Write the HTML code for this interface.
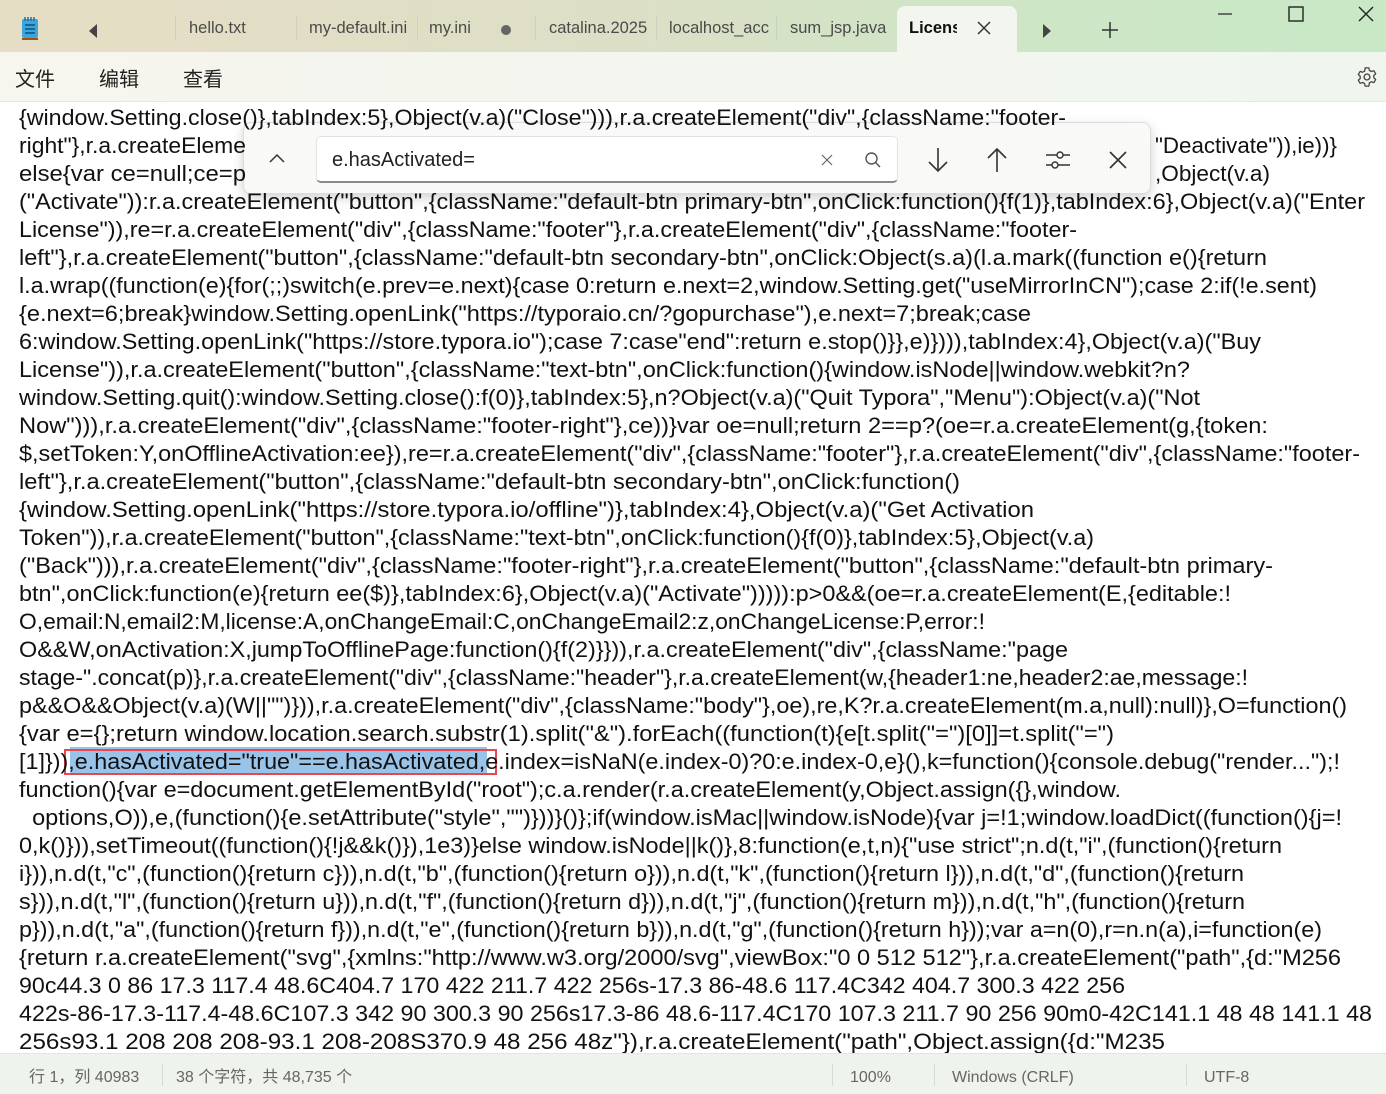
<!DOCTYPE html>
<html><head><meta charset="utf-8">
<style>
*{margin:0;padding:0;box-sizing:border-box}
body{width:1386px;height:1094px;overflow:hidden;position:relative;background:#fff;font-family:"Liberation Sans","Noto Sans CJK SC",sans-serif}
#title{position:absolute;left:0;top:0;width:1386px;height:52px;background:linear-gradient(90deg,#e6dec4 0%,#dcdfc6 45%,#cde6c6 75%,#c8e8c6 100%)}
#menu{position:absolute;left:0;top:52px;width:1386px;height:50px;background:linear-gradient(90deg,#f6f5ee,#f0f6ee);border-bottom:1px solid #e6e8e2}
.tab{position:absolute;top:19px;font-size:16.5px;color:#4a4a4a;white-space:nowrap;overflow:hidden}
.sep{position:absolute;top:16px;width:1px;height:24px;background:#cfcfc0}
#text{position:absolute;left:0;top:103px;width:1386px;height:950px;overflow:hidden}
.l{position:absolute;left:19px;height:28px;line-height:28px;font-size:22px;color:#111;white-space:pre;transform-origin:0 50%}
#status{position:absolute;left:0;top:1053px;width:1386px;height:41px;background:#eef3eb;border-top:1px solid #e2e6df;font-size:16px;color:#666}
#status span{position:absolute;top:15px;line-height:18px;white-space:nowrap}
#status i{position:absolute;top:10px;width:1px;height:22px;background:#d6dad2}
#find{position:absolute;left:243px;top:122px;width:908px;height:72px;background:#f9f9f8;border:1px solid #dcdcdc;border-radius:8px;box-shadow:0 4px 12px rgba(0,0,0,.18)}
#inp{position:absolute;left:72px;top:13px;width:582px;height:47px;background:#fff;border:1px solid #e3e3e3;border-bottom:2px solid #8a8a8a;border-radius:5px;font-size:20px;color:#222;padding:12px 0 0 15px}
</style></head><body>
<div id="title">
  <svg style="position:absolute;left:21px;top:16px" width="18" height="26" viewBox="0 0 18 26"><rect x="1" y="3" width="16" height="19" rx="2" fill="#3aa6dc"/><rect x="1" y="22" width="16" height="2" fill="#a0521e"/><path d="M4 9h10M4 13h10M4 17h10" stroke="#0d4f7a" stroke-width="1.6"/><path d="M4 1v4M7 1v4M10 1v4M13 1v4" stroke="#1b6aa0" stroke-width="1.4"/></svg>
  <svg style="position:absolute;left:88px;top:24px" width="10" height="14"><path d="M9 0L1 7l8 7z" fill="#444"/></svg>
  <div class="sep" style="left:175px"></div>
  <div class="tab" style="left:189px;width:100px">hello.txt</div>
  <div class="sep" style="left:296px"></div>
  <div class="tab" style="left:309px;width:102px">my-default.ini</div>
  <div class="sep" style="left:417px"></div>
  <div class="tab" style="left:429px;width:60px">my.ini</div>
  <div style="position:absolute;left:501px;top:25px;width:10px;height:10px;border-radius:50%;background:#666"></div>
  <div class="sep" style="left:535px"></div>
  <div class="tab" style="left:549px;width:102px">catalina.2025</div>
  <div class="sep" style="left:656px"></div>
  <div class="tab" style="left:669px;width:101px">localhost_acc</div>
  <div class="sep" style="left:776px"></div>
  <div class="tab" style="left:790px;width:104px">sum_jsp.java</div>
  <div style="position:absolute;left:897px;top:6px;width:120px;height:47px;background:#f2f6ee;border-radius:8px 8px 0 0"></div>
  <div class="tab" style="left:909px;width:48px;color:#111;font-weight:bold">License</div>
  <svg style="position:absolute;left:977px;top:21px" width="14" height="14"><path d="M1 1L13 13M13 1L1 13" stroke="#333" stroke-width="1.5"/></svg>
  <svg style="position:absolute;left:1042px;top:24px" width="10" height="14"><path d="M1 0l8 7-8 7z" fill="#444"/></svg>
  <svg style="position:absolute;left:1102px;top:22px" width="16" height="16"><path d="M8 0v16M0 8h16" stroke="#333" stroke-width="1.5"/></svg>
  <svg style="position:absolute;left:1218px;top:13px" width="14" height="2"><path d="M0 1h14" stroke="#222" stroke-width="1.2"/></svg>
  <svg style="position:absolute;left:1288px;top:6px" width="16" height="16"><rect x="1" y="1" width="14" height="14" fill="none" stroke="#222" stroke-width="1.4"/></svg>
  <svg style="position:absolute;left:1358px;top:6px" width="16" height="16"><path d="M1 1L15 15M15 1L1 15" stroke="#222" stroke-width="1.4"/></svg>
</div>
<div id="menu">
  <div style="position:absolute;left:15px;top:11px;font-size:20px;color:#222">文件</div>
  <div style="position:absolute;left:99px;top:11px;font-size:20px;color:#222">编辑</div>
  <div style="position:absolute;left:183px;top:11px;font-size:20px;color:#222">查看</div>
  <svg style="position:absolute;left:1356px;top:14px" width="22" height="22" viewBox="0 0 24 24"><circle cx="12" cy="12" r="3.2" fill="none" stroke="#444" stroke-width="1.5"/><path d="M10 2h4l.6 2.8 2.2 1.2 2.7-.9 2 3.4-2.1 1.9v2.4l2.1 1.9-2 3.4-2.7-.9-2.2 1.2L14 22h-4l-.6-2.8-2.2-1.2-2.7.9-2-3.4 2.1-1.9v-2.4L2.5 9.3l2-3.4 2.7.9 2.2-1.2z" fill="none" stroke="#444" stroke-width="1.4" stroke-linejoin="round"/></svg>
</div>
<div id="text">
<div style="position:absolute;left:70px;top:644px;width:417px;height:26px;background:#99c4ea"></div>
<div style="position:absolute;left:64px;top:646px;width:433px;height:26px;border:2px solid #e8474f;z-index:2"></div>
<div id="lines"></div>
</div>
<div id="find">
  <svg style="position:absolute;left:25px;top:30px" width="16" height="10"><path d="M1 9l7-7 7 7" fill="none" stroke="#333" stroke-width="1.5"/></svg>
  <div id="inp">e.hasActivated=</div>
  <svg style="position:absolute;left:577px;top:31px" width="12" height="12"><path d="M1 1l10 10M11 1L1 11" stroke="#666" stroke-width="1.2"/></svg>
  <svg style="position:absolute;left:620px;top:28px" width="18" height="18"><circle cx="7.5" cy="7.5" r="5.5" fill="none" stroke="#555" stroke-width="1.4"/><path d="M11.5 11.5L16 16" stroke="#555" stroke-width="1.5"/></svg>
  <svg style="position:absolute;left:683px;top:24px" width="22" height="26"><path d="M11 1v23M2 15l9 9 9-9" fill="none" stroke="#333" stroke-width="1.6"/></svg>
  <svg style="position:absolute;left:742px;top:24px" width="22" height="26"><path d="M11 25V2M2 11l9-9 9 9" fill="none" stroke="#333" stroke-width="1.6"/></svg>
  <svg style="position:absolute;left:802px;top:26px" width="24" height="22"><path d="M0 6h24M0 16h24" stroke="#333" stroke-width="1.4"/><circle cx="14" cy="6" r="3" fill="#f9f9f8" stroke="#333" stroke-width="1.4"/><circle cx="9" cy="16" r="3" fill="#f9f9f8" stroke="#333" stroke-width="1.4"/></svg>
  <svg style="position:absolute;left:865px;top:28px" width="18" height="18"><path d="M1 1l16 16M17 1L1 17" stroke="#333" stroke-width="1.6"/></svg>
</div>
<div id="status">
  <span style="left:29px">行 1，列 40983</span><i style="left:162px"></i>
  <span style="left:176px">38 个字符，共 48,735 个</span><i style="left:832px"></i>
  <span style="left:850px">100%</span><i style="left:934px"></i>
  <span style="left:952px">Windows (CRLF)</span><i style="left:1186px"></i>
  <span style="left:1204px">UTF-8</span>
</div>
<script>
var L=[
['{window.Setting.close()},tabIndex:5},Object(v.a)("Close"))),r.a.createElement("div",{className:"footer-',1066],
['right"},r.a.createEleme',246],
['else{var ce=null;ce=p',246],
['("Activate")):r.a.createElement("button",{className:"default-btn primary-btn",onClick:function(){f(1)},tabIndex:6},Object(v.a)("Enter',1365],
['License")),re=r.a.createElement("div",{className:"footer"},r.a.createElement("div",{className:"footer-',1077],
['left"},r.a.createElement("button",{className:"default-btn secondary-btn",onClick:Object(s.a)(l.a.mark((function e(){return',1267],
['l.a.wrap((function(e){for(;;)switch(e.prev=e.next){case 0:return e.next=2,window.Setting.get("useMirrorInCN");case 2:if(!e.sent)',1317],
['{e.next=6;break}window.Setting.openLink("https://typoraio.cn/?gopurchase"),e.next=7;break;case',1031],
['6:window.Setting.openLink("https://store.typora.io");case 7:case"end":return e.stop()}},e)}))),tabIndex:4},Object(v.a)("Buy',1261],
['License")),r.a.createElement("button",{className:"text-btn",onClick:function(){window.isNode||window.webkit?n?',1190],
['window.Setting.quit():window.Setting.close():f(0)},tabIndex:5},n?Object(v.a)("Quit Typora","Menu"):Object(v.a)("Not',1200],
['Now"))),r.a.createElement("div",{className:"footer-right"},ce))}var oe=null;return 2==p?(oe=r.a.createElement(g,{token:',1268],
['$,setToken:Y,onOfflineActivation:ee}),re=r.a.createElement("div",{className:"footer"},r.a.createElement("div",{className:"footer-',1360],
['left"},r.a.createElement("button",{className:"default-btn secondary-btn",onClick:function()',960],
['{window.Setting.openLink("https://store.typora.io/offline")},tabIndex:4},Object(v.a)("Get Activation',1034],
['Token")),r.a.createElement("button",{className:"text-btn",onClick:function(){f(0)},tabIndex:5},Object(v.a)',1094],
['("Back"))),r.a.createElement("div",{className:"footer-right"},r.a.createElement("button",{className:"default-btn primary-',1273],
['btn",onClick:function(e){return ee($)},tabIndex:6},Object(v.a)("Activate"))))):p>0&&(oe=r.a.createElement(E,{editable:!',1231],
['O,email:N,email2:M,license:A,onChangeEmail:C,onChangeEmail2:z,onChangeLicense:P,error:!',985],
['O&&W,onActivation:X,jumpToOfflinePage:function(){f(2)}})),r.a.createElement("div",{className:"page',1068],
['stage-".concat(p)},r.a.createElement("div",{className:"header"},r.a.createElement(w,{header1:ne,header2:ae,message:!',1248],
['p&&O&&Object(v.a)(W||"")})),r.a.createElement("div",{className:"body"},oe),re,K?r.a.createElement(m.a,null):null)},O=function()',1347],
['{var e={};return window.location.search.substr(1).split("&").forEach((function(t){e[t.split("=")[0]]=t.split("=")',1114],
['[1]})),e.hasActivated="true"==e.hasActivated,e.index=isNaN(e.index-0)?0:e.index-0,e}(),k=function(){console.debug("render...");!',1340],
['function(){var e=document.getElementById("root");c.a.render(r.a.createElement(y,Object.assign({},window.',1121],
['  options,O)),e,(function(){e.setAttribute("style","")}))}()};if(window.isMac||window.isNode){var j=!1;window.loadDict((function(){j=!',1342],
['0,k()})),setTimeout((function(){!j&&k()}),1e3)}else window.isNode||k()},8:function(e,t,n){"use strict";n.d(t,"i",(function(){return',1282],
['i})),n.d(t,"c",(function(){return c})),n.d(t,"b",(function(){return o})),n.d(t,"k",(function(){return l})),n.d(t,"d",(function(){return',1244],
['s})),n.d(t,"l",(function(){return u})),n.d(t,"f",(function(){return d})),n.d(t,"j",(function(){return m})),n.d(t,"h",(function(){return',1245],
['p})),n.d(t,"a",(function(){return f})),n.d(t,"e",(function(){return b})),n.d(t,"g",(function(){return h}));var a=n(0),r=n.n(a),i=function(e)',1322],
['{return r.a.createElement("svg",{xmlns:"http://www.w3.org/2000/svg",viewBox:"0 0 512 512"},r.a.createElement("path",{d:"M256',1341],
['90c44.3 0 86 17.3 117.4 48.6C404.7 170 422 211.7 422 256s-17.3 86-48.6 117.4C342 404.7 300.3 422 256',1125],
['422s-86-17.3-117.4-48.6C107.3 342 90 300.3 90 256s17.3-86 48.6-117.4C170 107.3 211.7 90 256 90m0-42C141.1 48 48 141.1 48',1372],
['256s93.1 208 208 208-93.1 208-208S370.9 48 256 48z"}),r.a.createElement("path",Object.assign({d:"M235',1165]
];
var c=document.getElementById('lines');
L.forEach(function(a,i){var d=document.createElement('div');d.className='l';d.style.top=(1+i*28)+'px';d.style.zIndex=3;d.textContent=a[0];c.appendChild(d);
var w=d.getBoundingClientRect().width;if(w>0)d.style.transform='scaleX('+((a[1]-19)/w)+')';});
function extra(t,y,w){var d=document.createElement('div');d.className='l';d.style.left='1155px';d.style.top=y+'px';d.textContent=t;c.appendChild(d);var ww=d.getBoundingClientRect().width;d.style.transform='scaleX('+(w/ww)+')';}
extra('"Deactivate")),ie))}',29,182);
extra(',Object(v.a)',57,115);
</script>
</body></html>
